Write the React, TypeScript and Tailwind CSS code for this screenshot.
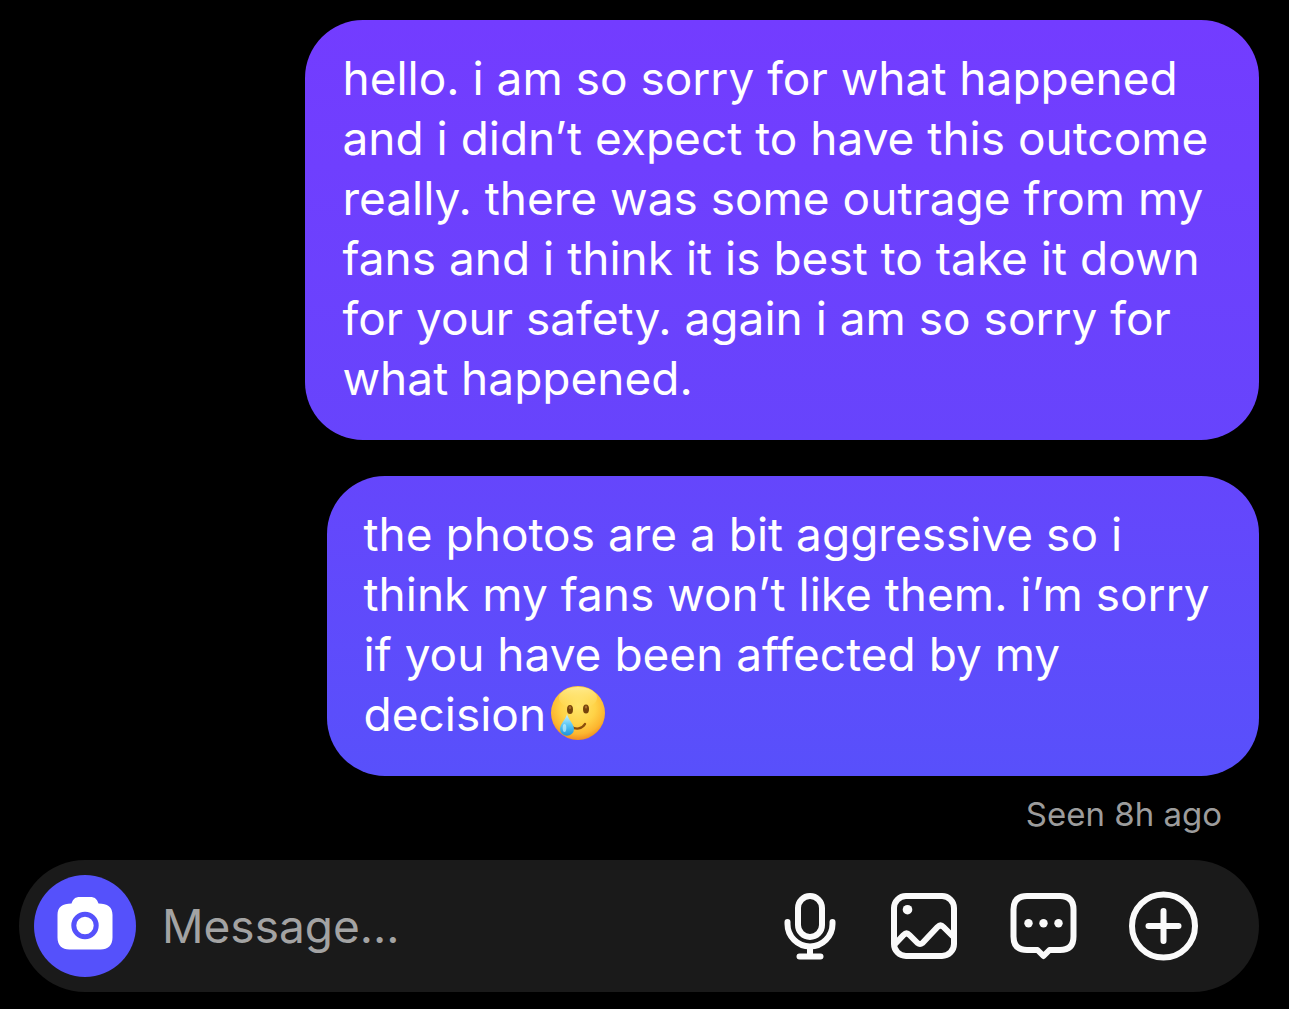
import { useState } from "react";

const APOLOGY = [
  "hello. i am so sorry for what happened",
  "and i didn’t expect to have this outcome",
  "really. there was some outrage from my",
  "fans and i think it is best to take it down",
  "for your safety. again i am so sorry for",
  "what happened.",
].join("\n");

const FOLLOW_UP = [
  "the photos are a bit aggressive so i",
  "think my fans won’t like them. i’m sorry",
  "if you have been affected by my",
  "decision",
].join("\n");

function TearyEmoji() {
  return (
    <svg
      role="img"
      aria-label="smiling face with tear"
      viewBox="0 0 56 56"
      className="ml-1 inline-block size-14 align-[-10px]"
    >
      <defs>
        <radialGradient id="face" cx="0.5" cy="0.38" r="0.64">
          <stop offset="0" stopColor="#ffe66c" />
          <stop offset="0.5" stopColor="#ffd347" />
          <stop offset="0.8" stopColor="#fcb52f" />
          <stop offset="1" stopColor="#ee8420" />
        </radialGradient>
        <linearGradient id="shine" x1="0" y1="0" x2="0" y2="1">
          <stop offset="0" stopColor="#fff2a0" stopOpacity="0.8" />
          <stop offset="1" stopColor="#ffe36b" stopOpacity="0" />
        </linearGradient>
        <linearGradient id="tear" x1="0" y1="0" x2="0" y2="1">
          <stop offset="0" stopColor="#d3f4ff" />
          <stop offset="0.5" stopColor="#5cc8f4" />
          <stop offset="1" stopColor="#1a92dc" />
        </linearGradient>
      </defs>
      <circle cx="28" cy="28" r="27" fill="url(#face)" />
      <ellipse cx="28" cy="13" rx="19" ry="11" fill="url(#shine)" />
      <ellipse cx="20" cy="24.500" rx="3" ry="4.500" fill="#75420c" />
      <ellipse cx="36" cy="24" rx="3" ry="4.500" fill="#75420c" />
      <ellipse cx="20" cy="22.500" rx="1.200" ry="1.600" fill="#a8702b" />
      <ellipse cx="36" cy="22" rx="1.200" ry="1.600" fill="#a8702b" />
      <path d="M21 41.500c5 3.500 11 2.500 14-2.500" fill="none" stroke="#8b4d0c" strokeWidth="2.400" strokeLinecap="round" />
      <path d="M17 29c-1 5-7 10-7 15a7 6.800 0 0 0 14 0c0-5-6-10-7-15z" fill="url(#tear)" />
      <ellipse cx="14.500" cy="43" rx="1.800" ry="4" fill="#d8f6ff" opacity="0.6" />
    </svg>
  );
}

function CameraIcon() {
  return (
    <svg viewBox="0 0 56 54" className="mb-1.5 h-[54px] w-14" aria-hidden="true">
      <path
        d="M14.500 7.500C16 3 18.500 1 22.500 1h11c4 0 6.500 2 8 6.500C50.500 7.500 55.500 11 55.500 19v22.500c0 8-4.500 12-12 12h-31c-7.500 0-12-4-12-12V19c0-8 5-11.500 14-11.500z"
        fill="#fff"
      />
      <circle cx="28" cy="29.500" r="11.200" fill="none" stroke="#5551fb" strokeWidth="5" />
    </svg>
  );
}

const ICON = "size-[70px] fill-none stroke-[#fafafa] stroke-[6]";

function MicIcon() {
  return (
    <svg viewBox="0 0 70 70" className={ICON} strokeLinecap="round" strokeLinejoin="round" aria-hidden="true">
      <rect x="29" y="5" width="24" height="41" rx="12" />
      <path d="M18.500 31v2a22.500 22.500 0 0 0 45 0v-2M41 55.500V65M30.500 65.500h21" />
    </svg>
  );
}

function GalleryIcon() {
  return (
    <svg viewBox="0 0 70 70" className={ICON} strokeLinecap="round" strokeLinejoin="round" aria-hidden="true">
      <rect x="5" y="5" width="60" height="60" rx="12" />
      <path d="M6.500 52.500l8-8.500q3-3 6 0l8 8q2.500 2 5 0l15-16q3-3 6 0l9 9" />
      <circle cx="18.500" cy="18.700" r="4.800" fill="#fafafa" stroke="none" />
    </svg>
  );
}

function RepliesIcon() {
  return (
    <svg viewBox="0 0 70 70" className={ICON} strokeLinecap="round" strokeLinejoin="round" aria-hidden="true">
      <path d="M18 5h33q13.500 0 13.500 13.500v27q0 13.500-13.500 13.500h-10.500l-6 6-6-6H18Q4.500 59 4.500 45.500v-27Q4.500 5 18 5z" />
      <g fill="#fafafa" stroke="none">
        <circle cx="19.500" cy="32.300" r="4.200" />
        <circle cx="34.500" cy="32.300" r="4.200" />
        <circle cx="49.500" cy="32.300" r="4.200" />
      </g>
    </svg>
  );
}

function PlusIcon() {
  return (
    <svg viewBox="0 0 70 70" className={ICON} strokeLinecap="round" aria-hidden="true">
      <circle cx="34.500" cy="35" r="31.500" />
      <path d="M34.500 20v30M19.500 35h30" />
    </svg>
  );
}

const ACTIONS = [
  { label: "Record voice message", Icon: MicIcon },
  { label: "Choose photo", Icon: GalleryIcon },
  { label: "Quick replies", Icon: RepliesIcon },
  { label: "More", Icon: PlusIcon },
];

export default function App() {
  const [draft, setDraft] = useState("");

  return (
    <main className="flex min-h-screen flex-col bg-black pt-5 pr-[30px] pb-4 pl-[19px] font-['Inter',sans-serif] text-white">
      {/* Messages */}
      <section className="flex flex-col items-end gap-9 text-[46px] leading-[60px]">
        <p className="w-[76.9%] rounded-[58px] bg-linear-to-b from-[#733cff] to-[#6744fc] px-[37px] pt-7 pb-8 whitespace-pre-line">
          {APOLOGY}
        </p>
        <p className="w-[75.2%] rounded-[58px] bg-linear-to-b from-[#6546fc] to-[#5850fb] px-[37px] pt-7 pb-8 whitespace-pre-line">
          {FOLLOW_UP}
          <TearyEmoji />
        </p>
      </section>

      <p className="mt-4 pr-[37px] text-right text-[33px] leading-[44px] text-[#9c9c9c]">Seen 8h ago</p>

      {/* Composer */}
      <form
        onSubmit={(e) => e.preventDefault()}
        className="mt-6 flex h-[132px] items-center rounded-full bg-[#1a1a1a] pr-[60px] pl-[15px]"
      >
        <button
          type="button"
          aria-label="Open camera"
          className="flex size-[102px] shrink-0 items-center justify-center rounded-full bg-[#5551fb]"
        >
          <CameraIcon />
        </button>
        <input
          type="text"
          aria-label="Message"
          value={draft}
          onChange={(e) => setDraft(e.target.value)}
          placeholder="Message..."
          className="ml-[26px] min-w-0 flex-1 bg-transparent text-[46px] leading-[60px] outline-none placeholder:text-[#a3a3a3]"
        />
        <div className="flex shrink-0 gap-[50px]">
          {ACTIONS.map(({ label, Icon }) => (
            <button key={label} type="button" aria-label={label}>
              <Icon />
            </button>
          ))}
        </div>
      </form>
    </main>
  );
}
